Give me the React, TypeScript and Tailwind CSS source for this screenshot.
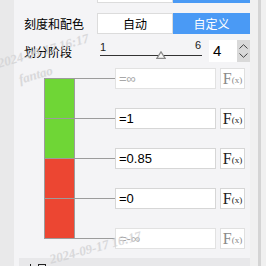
import React from "react";

const cjk = { fontFamily: '"Noto Sans CJK SC", "Noto Sans", sans-serif' };
const sans = { fontFamily: '"Liberation Sans", Arial, sans-serif' };
const serif = { fontFamily: '"Liberation Serif", "Times New Roman", serif' };

function Fx({ disabled }: { disabled?: boolean }) {
  return (
    <div
      className={`w-[25px] h-[21px] bg-white border flex items-center justify-center ${
        disabled ? "border-[#e0e0e0] text-[#8a8a8a]" : "border-[#d6d6d6] text-[#222]"
      }`}
      style={serif}
    >
      <span className="text-[16px] leading-none">F</span>
      <span className="text-[9px] leading-none mt-[3px]">(x)</span>
    </div>
  );
}

function Row({ value, disabled }: { value: string; disabled?: boolean }) {
  return (
    <div className="flex items-center h-[21px]">
      <div className="w-[41px] h-px bg-[#9c9c9c]" />
      <div
        className={`w-[101px] h-[21px] bg-white border flex items-center pl-[3px] text-[13px] ${
          disabled ? "border-[#e2e2e2] text-[#a8a8a8]" : "border-[#d6d6d6] text-black"
        }`}
        style={sans}
      >
        {value}
      </div>
      <div className="w-[4px]" />
      <Fx disabled={disabled} />
    </div>
  );
}

export default function App() {
  return (
    <div className="w-[266px] h-[266px] flex overflow-hidden relative" style={cjk}>
      <div className="w-[14px] h-full bg-[#e9e9ea]" />
      <div className="w-[236px] h-full bg-[#f4f4f6] flex flex-col">
        {/* cut previous toggle row */}
        <div className="flex h-[3px] items-end">
          <div className="w-[83px]" />
          <div className="w-[76px] h-[3px] bg-white border-b border-x border-[#dcdcdc]" />
          <div className="w-[77px] h-[3px] bg-[#4a9af5]" />
        </div>
        {/* row 1 */}
        <div className="flex items-center h-[21px] mt-[10px]">
          <div className="w-[83px] pl-[10px] text-[12px] text-black">刻度和配色</div>
          <div className="w-[76px] h-[21px] bg-white border border-[#dcdcdc] flex items-center justify-center text-[12px] text-black">
            自动
          </div>
          <div className="w-[77px] h-[21px] bg-[#4a9af5] flex items-center justify-center text-[12px] text-white">
            自定义
          </div>
        </div>
        {/* row 2 */}
        <div className="flex items-start h-[22px] mt-[6px]">
          <div className="w-[86px] pl-[10px] pt-[4px] text-[12px] text-black leading-[16px]">划分阶段</div>
          <div className="w-[102px] h-[22px] relative">
            <div className="absolute left-0 top-[2px] text-[11px] text-[#222] leading-none" style={sans}>1</div>
            <div className="absolute left-[95px] top-[0px] text-[11px] text-[#222] leading-none" style={sans}>6</div>
            <div className="absolute left-0 top-[15px] w-[102px] h-px bg-[#333]" />
            <svg className="absolute left-[56px] top-[11px]" width="10" height="8" viewBox="0 0 10 8">
              <polygon points="5,0.8 9.2,7.3 0.8,7.3" fill="#f7f7f7" stroke="#8a8a8a" strokeWidth="1.2" />
            </svg>
          </div>
          <div className="w-[7px]" />
          <div className="w-[28px] h-[22px] bg-white flex items-center pl-[4px] text-[15px] text-black" style={sans}>
            4
          </div>
          <div className="w-[13px] h-[22px] bg-[#d9d9d9] flex flex-col items-center justify-center gap-[4px]">
            <svg width="9" height="5" viewBox="0 0 9 5">
              <polyline points="0.5,4.5 4.5,0.7 8.5,4.5" fill="none" stroke="#444" strokeWidth="1" />
            </svg>
            <svg width="9" height="5" viewBox="0 0 9 5">
              <polyline points="0.5,0.5 4.5,4.3 8.5,0.5" fill="none" stroke="#444" strokeWidth="1" />
            </svg>
          </div>
        </div>
        {/* color area */}
        <div className="flex mt-[6px]">
          <div className="w-[30px]" />
          <div className="w-[31px] mt-[10px] flex flex-col">
            <div className="h-[40px] bg-[#6fd636] border-t border-x border-[#9c9c9c]" />
            <div className="h-[40px] bg-[#6fd636] border-t border-x border-[#9c9c9c]" />
            <div className="h-[40px] bg-[#ec4632] border-t border-x border-[#9c9c9c]" />
            <div className="h-[41px] bg-[#ec4632] border-y border-x border-[#9c9c9c]" />
          </div>
          <div className="flex flex-col gap-[19px] ml-[-1px]">
            <Row value="=∞" disabled />
            <Row value="=1" />
            <Row value="=0.85" />
            <Row value="=0" />
            <Row value="=-∞" disabled />
          </div>
        </div>
        {/* bottom band */}
        <div className="flex mt-[9px] ml-[5px] h-[12px] bg-[#e8e8ea] items-start pl-[8px] gap-[4px]">
          <div className="relative w-[7px] h-[6px] mt-[6px]">
            <div className="absolute left-[3px] top-0 w-px h-[6px] bg-[#222]" />
            <div className="absolute left-0 top-[3px] w-[7px] h-px bg-[#222]" />
          </div>
          <div className="w-[8px] h-[8px] border border-[#222] mt-[6px]" />
        </div>
      </div>
      <div className="w-[16px] h-full bg-[#f0f0f0] flex">
        <div className="w-[8px]" />
        <div className="w-[3px] h-full bg-[#d4d4d4]" />
      </div>
      {/* watermarks */}
      <div
        className="absolute left-[-2px] top-[54px] text-[13px] font-bold italic text-[#d2d2d4] whitespace-nowrap pointer-events-none -rotate-[16deg] origin-left opacity-80"
        style={serif}
      >
        2024-09-17 16:17
      </div>
      <div
        className="absolute left-[19px] top-[70px] text-[13px] font-bold italic text-[#d2d2d4] whitespace-nowrap pointer-events-none -rotate-[16deg] origin-left opacity-80"
        style={serif}
      >
        fantao
      </div>
      <div
        className="absolute left-[50px] top-[250px] text-[13px] font-bold italic text-[#d2d2d4] whitespace-nowrap pointer-events-none -rotate-[15deg] origin-left opacity-80"
        style={serif}
      >
        2024-09-17 16:17
      </div>
    </div>
  );
}
